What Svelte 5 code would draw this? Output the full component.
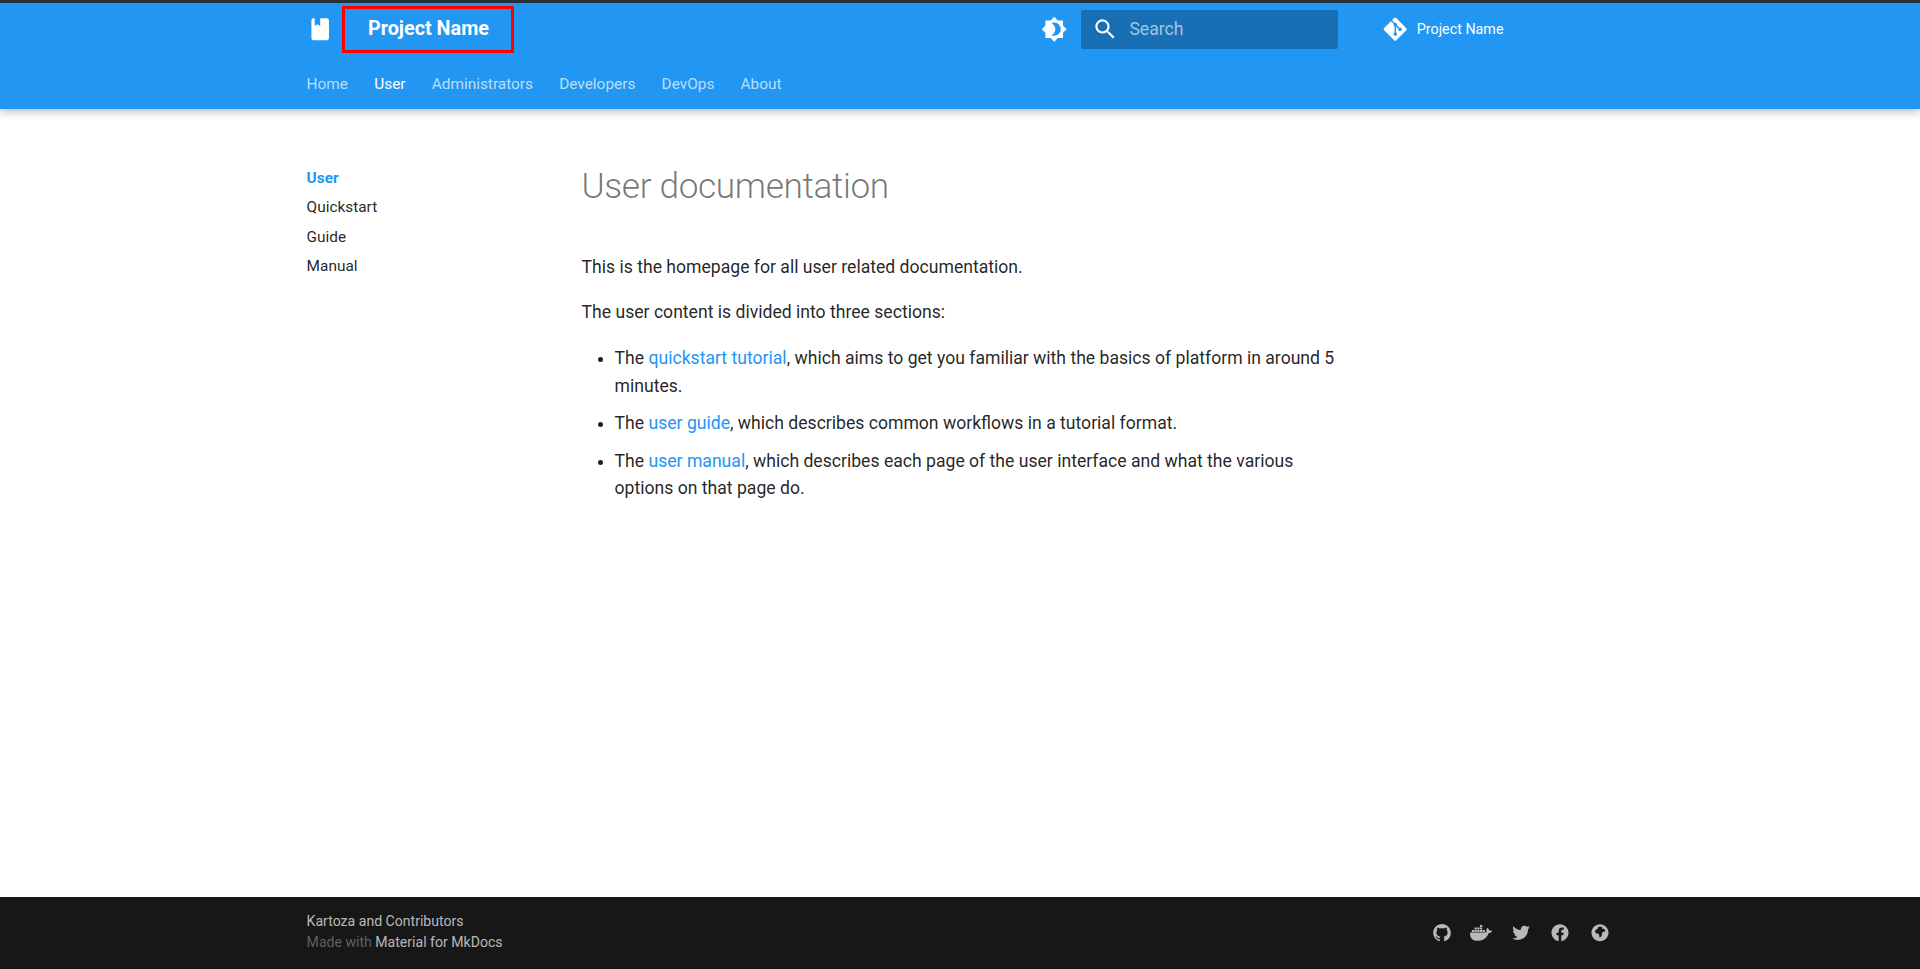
<script>
  const tabs = [
    { label: 'Home' },
    { label: 'User', active: true },
    { label: 'Administrators' },
    { label: 'Developers' },
    { label: 'DevOps' },
    { label: 'About' }
  ];

  const sideLinks = ['User', 'Quickstart', 'Guide', 'Manual'];

  const socials = [
    {
      name: 'github',
      box: '0 0 16 16',
      d: 'M8 0C3.58 0 0 3.58 0 8c0 3.54 2.29 6.53 5.47 7.59.4.07.55-.17.55-.38 0-.19-.01-.82-.01-1.49-2.01.37-2.53-.49-2.69-.94-.09-.23-.48-.94-.82-1.13-.28-.15-.68-.52-.01-.53.63-.01 1.08.58 1.23.82.72 1.21 1.87.87 2.33.66.07-.52.28-.87.51-1.07-1.78-.2-3.64-.89-3.64-3.95 0-.87.31-1.59.82-2.15-.08-.2-.36-1.02.08-2.12 0 0 .67-.21 2.2.82.64-.18 1.32-.27 2-.27.68 0 1.36.09 2 .27 1.53-1.04 2.2-.82 2.2-.82.44 1.1.16 1.92.08 2.12.51.56.82 1.27.82 2.15 0 3.07-1.87 3.75-3.65 3.95.29.25.54.73.54 1.48 0 1.07-.01 1.93-.01 2.2 0 .21.15.46.55.38A8.013 8.013 0 0016 8c0-4.42-3.58-8-8-8z'
    },
    {
      name: 'docker',
      box: '0 3 24 18',
      d: 'M13.983 11.078h2.119a.186.186 0 00.186-.185V9.006a.186.186 0 00-.186-.186h-2.119a.185.185 0 00-.185.185v1.888c0 .102.083.185.185.185m-2.954-5.43h2.118a.186.186 0 00.186-.186V3.574a.186.186 0 00-.186-.185h-2.118a.185.185 0 00-.185.185v1.888c0 .102.082.185.185.186m0 2.716h2.118a.187.187 0 00.186-.186V6.29a.186.186 0 00-.186-.185h-2.118a.185.185 0 00-.185.185v1.887c0 .102.082.185.185.186m-2.93 0h2.12a.186.186 0 00.184-.186V6.29a.185.185 0 00-.185-.185H8.1a.185.185 0 00-.185.185v1.887c0 .102.083.185.185.186m-2.964 0h2.119a.186.186 0 00.185-.186V6.29a.185.185 0 00-.185-.185H5.136a.186.186 0 00-.186.185v1.887c0 .102.084.185.186.186m5.893 2.715h2.118a.186.186 0 00.186-.185V9.006a.186.186 0 00-.186-.186h-2.118a.185.185 0 00-.185.185v1.888c0 .102.082.185.185.185m-2.93 0h2.12a.185.185 0 00.184-.185V9.006a.185.185 0 00-.184-.186h-2.12a.185.185 0 00-.184.185v1.888c0 .102.083.185.185.185m-2.964 0h2.119a.185.185 0 00.185-.185V9.006a.185.185 0 00-.184-.186h-2.12a.186.186 0 00-.186.186v1.887c0 .102.084.185.186.185m-2.92 0h2.12a.185.185 0 00.184-.185V9.006a.185.185 0 00-.184-.186h-2.12a.185.185 0 00-.184.185v1.888c0 .102.082.185.185.185M23.763 9.89c-.065-.051-.672-.51-1.954-.51-.338.001-.676.03-1.01.087-.248-1.7-1.653-2.53-1.716-2.566l-.344-.199-.226.327c-.284.438-.49.922-.612 1.43-.23.97-.09 1.882.403 2.661-.595.332-1.55.413-1.744.42H.751a.751.751 0 00-.75.748 11.376 11.376 0 00.692 4.062c.545 1.428 1.355 2.48 2.41 3.124 1.18.723 3.1 1.137 5.275 1.137.983.003 1.963-.086 2.93-.266a12.248 12.248 0 003.823-1.389c.98-.567 1.86-1.288 2.61-2.136 1.252-1.418 1.998-2.997 2.553-4.4h.221c1.372 0 2.215-.549 2.68-1.009.309-.293.55-.65.707-1.046l.098-.288Z'
    },
    {
      name: 'twitter',
      box: '0 0 512 512',
      d: 'M459.37 151.716c.325 4.548.325 9.097.325 13.645 0 138.72-105.583 298.558-298.558 298.558-59.452 0-114.68-17.219-161.137-47.106 8.447.974 16.568 1.299 25.34 1.299 49.055 0 94.213-16.568 130.274-44.832-46.132-.975-84.792-31.188-98.112-72.772 6.498.974 12.995 1.624 19.818 1.624 9.421 0 18.843-1.3 27.614-3.573-48.081-9.747-84.143-51.98-84.143-102.985v-1.299c13.969 7.797 30.214 12.67 47.431 13.319-28.264-18.843-46.781-51.005-46.781-87.391 0-19.492 5.197-37.36 14.294-52.954 51.655 63.675 129.3 105.258 216.365 109.807-1.624-7.797-2.599-15.918-2.599-24.04 0-57.828 46.782-104.934 104.934-104.934 30.213 0 57.502 12.67 76.67 33.137 23.715-4.548 46.456-13.32 66.599-25.34-7.798 24.366-24.366 44.833-46.132 57.827 21.117-2.273 41.584-8.122 60.426-16.243-14.292 20.791-32.161 39.308-52.628 54.253z'
    },
    {
      name: 'facebook',
      box: '0 0 512 512',
      d: 'M504 256C504 119 393 8 256 8S8 119 8 256c0 123.78 90.69 226.38 209.25 245V327.69h-63V256h63v-54.64c0-62.15 37-96.48 93.67-96.48 27.14 0 55.52 4.84 55.52 4.84v61h-31.28c-30.8 0-40.41 19.12-40.41 38.73V256h68.78l-11 71.69h-57.78V501C413.31 482.38 504 379.78 504 256z'
    },
    {
      name: 'globe',
      box: '0 0 512 512',
      d: 'M256 8C119 8 8 119 8 256s111 248 248 248 248-111 248-248S393 8 256 8zM196 92l60-22 66 24-10 34 54 10 46 46-16 36-58 10-30 46 8 44-44 66-30 4-12-70-20-36-58-8-40-44 14-60 50-30 36-36-28-14z'
    }
  ];
</script>

<div class="page">
  <header class="header">
    <div class="grid top">
      <svg class="logo" viewBox="0 0 24 24"><path d="M18 22a2 2 0 0 0 2-2V4a2 2 0 0 0-2-2h-6v7L9.5 7.5 7 9V2H6a2 2 0 0 0-2 2v16a2 2 0 0 0 2 2h12z" /></svg>
      <div class="title">Project Name</div>
      <svg class="palette" viewBox="0 0 24 24"><path d="M12 18c-.89 0-1.74-.2-2.5-.55C11.56 16.5 13 14.42 13 12s-1.44-4.5-3.5-5.45C10.26 6.2 11.11 6 12 6a6 6 0 0 1 6 6 6 6 0 0 1-6 6m8-2.69L23.31 12 20 8.69V4h-4.69L12 .69 8.69 4H4v4.69L.69 12 4 15.31V20h4.69L12 23.31 15.31 20H20v-4.69z" /></svg>
      <div class="search">
        <svg viewBox="0 0 24 24"><path d="M9.5 3A6.5 6.5 0 0 1 16 9.5c0 1.61-.59 3.09-1.56 4.23l.27.27h.79l5 5-1.5 1.5-5-5v-.79l-.27-.27A6.516 6.516 0 0 1 9.5 16 6.5 6.5 0 0 1 3 9.5 6.5 6.5 0 0 1 9.5 3m0 2C7 5 5 7 5 9.5S7 14 9.5 14 14 12 14 9.5 12 5 9.5 5z" /></svg>
        <span>Search</span>
      </div>
      <div class="source">
        <svg viewBox="0 0 448 512"><path d="M439.55 236.05L244 40.45a28.87 28.87 0 0 0-40.81 0l-40.66 40.63 51.52 51.52c27.06-9.14 52.68 16.77 43.39 43.68l49.66 49.66c34.23-11.8 61.18 31 35.47 56.69-26.49 26.49-70.21-2.87-56-37.34L240.22 199v121.85c25.3 12.54 22.26 41.85 9.08 55a34.34 34.34 0 0 1-48.55 0c-17.57-17.6-11.07-46.91 11.25-56v-123c-20.8-8.51-24.6-30.74-18.64-45L142.57 101 8.45 235.14a28.86 28.86 0 0 0 0 40.81l195.61 195.6a28.86 28.86 0 0 0 40.8 0l194.69-194.69a28.86 28.86 0 0 0 0-40.81z" /></svg>
        <span>Project Name</span>
      </div>
    </div>
    <nav class="grid tabs">
      {#each tabs as tab}
        <a href="#top" class:active={tab.active}>{tab.label}</a>
      {/each}
    </nav>
  </header>

  <main class="grid body">
    <aside class="sidebar">
      {#each sideLinks as link, i}
        <a href="#top" class:current={i === 0}>{link}</a>
      {/each}
    </aside>
    <article class="content">
      <h1>User documentation</h1>
      <p>This is the homepage for all user related documentation.</p>
      <p>The user content is divided into three sections:</p>
      <ul>
        <li>The <a href="#top">quickstart tutorial</a>, which aims to get you familiar with the basics of platform in around 5 minutes.</li>
        <li>The <a href="#top">user guide</a>, which describes common workflows in a tutorial format.</li>
        <li>The <a href="#top">user manual</a>, which describes each page of the user interface and what the various options on that page do.</li>
      </ul>
    </article>
  </main>

  <footer class="footer">
    <div class="grid footer-inner">
      <div class="meta">
        <div>Kartoza and Contributors</div>
        <div class="made">Made with <a href="#top">Material for MkDocs</a></div>
      </div>
      <div class="social">
        {#each socials as s}
          <a href="#top" aria-label={s.name}>
            <svg viewBox={s.box}><path fill-rule="evenodd" d={s.d} /></svg>
          </a>
        {/each}
      </div>
    </div>
  </footer>
</div>

<style>
  :global(body) {
    font-family: Roboto, sans-serif;
    color: rgba(0, 0, 0, 0.87);
    background: #fff;
  }

  a {
    text-decoration: none;
  }

  .page {
    height: 969px;
    display: flex;
    flex-direction: column;
  }

  .grid {
    width: 1342px;
    box-sizing: border-box;
    margin: 0 auto;
    padding: 0 17.6px;
  }

  .header {
    background: #2196f3;
    border-top: 3px solid #263238;
    height: 109px;
    box-sizing: border-box;
    color: #fff;
    box-shadow: 0 0 4px rgba(0, 0, 0, 0.1), 0 4px 8px rgba(0, 0, 0, 0.2);
  }

  .top {
    display: flex;
    align-items: center;
    height: 53px;
  }

  .top svg {
    fill: #fff;
  }

  .logo {
    width: 26.4px;
    height: 26.4px;
    margin-left: 0;
    margin-top: 0;
  }

  .title {
    width: 172px;
    height: 47px;
    box-sizing: border-box;
    border: 3px solid #f00;
    margin-left: 9px;
    padding-left: 23px;
    font-size: 19.8px;
    font-weight: 700;
    line-height: 39px;
  }

  .palette {
    width: 26.4px;
    height: 26.4px;
    margin-left: auto;
  }

  .search {
    width: 257.4px;
    height: 39.6px;
    margin-left: 14px;
    display: flex;
    align-items: center;
    box-sizing: border-box;
    padding-left: 11px;
    background: rgba(0, 0, 0, 0.26);
    border-radius: 2px;
    color: rgba(255, 255, 255, 0.6);
    font-size: 17.6px;
    line-height: 38px;
  }

  .search svg {
    width: 26.4px;
    height: 26.4px;
    margin-right: 11px;
  }

  .search span {
    margin-top: -1px;
  }

  .source {
    width: 231px;
    margin-left: 44px;
    display: flex;
    align-items: center;
    font-size: 14.3px;
  }

  .source svg {
    width: 26.4px;
    height: 26.4px;
    margin-right: 8px;
  }

  .tabs {
    display: flex;
    gap: 26.2px;
    height: 53px;
    align-items: center;
    font-size: 15.4px;
  }

  .tabs a {
    color: rgba(255, 255, 255, 0.7);
    margin-top: 3px;
  }

  .tabs a.active {
    color: #fff;
  }

  .body {
    flex: 1;
    display: flex;
  }

  .sidebar {
    width: 248.6px;
    flex-shrink: 0;
    padding-top: 59px;
    font-size: 15.4px;
    line-height: 20px;
    display: flex;
    flex-direction: column;
    gap: 9.4px;
  }

  .sidebar a {
    color: rgba(0, 0, 0, 0.87);
  }

  .sidebar a.current {
    color: #2196f3;
    font-weight: 700;
  }

  .content {
    width: 757px;
    margin-left: 26.4px;
    padding-top: 54px;
    font-size: 17.6px;
    line-height: 28.16px;
  }

  h1 {
    margin: 0 0 43.5px;
    font-size: 35.2px;
    font-weight: 300;
    line-height: 46px;
    color: rgba(0, 0, 0, 0.54);
    letter-spacing: -0.35px;
  }

  p {
    margin: 17.6px 0;
  }

  ul {
    margin: 19px 0 17.6px 11px;
    padding: 0;
  }

  li {
    margin: 0 0 10px 22px;
    line-height: 27.4px;
  }

  .content a {
    color: #2196f3;
  }

  .footer {
    background: #171717;
    height: 72px;
    color: rgba(255, 255, 255, 0.7);
  }

  .footer-inner {
    height: 100%;
    display: flex;
    align-items: center;
    justify-content: space-between;
  }

  .meta {
    font-size: 14.08px;
    line-height: 21.5px;
    margin-top: -2px;
  }

  .made {
    color: rgba(255, 255, 255, 0.32);
  }

  .made a {
    color: rgba(255, 255, 255, 0.7);
  }

  .social {
    display: flex;
    gap: 4.4px;
    margin-right: -4px;
  }

  .social a {
    width: 35.2px;
    height: 35.2px;
    display: flex;
    align-items: center;
    justify-content: center;
  }

  .social svg {
    height: 17.6px;
    width: 22px;
    fill: rgba(255, 255, 255, 0.7);
  }
</style>
